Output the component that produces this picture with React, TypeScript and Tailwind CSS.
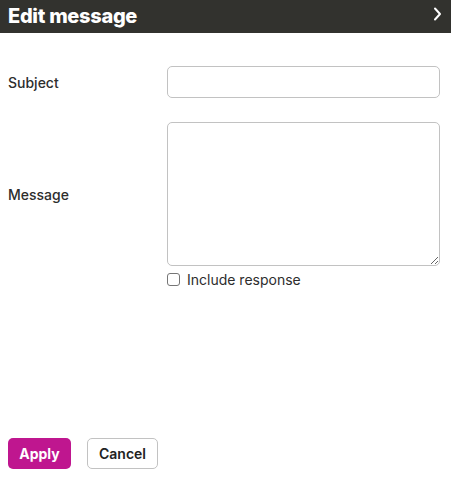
export default function App() {
  return (
    <div className="w-[451px] h-[478px] bg-white flex flex-col" style={{ fontFamily: "Inter, 'Noto Sans', sans-serif" }}>
      <div className="h-[33px] bg-[#32322e] flex items-center justify-between pl-2 pr-[9px] shrink-0">
        <h1 className="text-[20px] leading-none font-extrabold text-white tracking-[-0.3px] mb-[2px]">Edit message</h1>
        <svg width="9" height="14" viewBox="0 0 9 14" fill="none" className="mb-[5px]">
          <path d="M2 1.5 L7 7 L2 12.5" stroke="white" strokeWidth="2" strokeLinecap="round" strokeLinejoin="round" />
        </svg>
      </div>
      <div className="flex-1 flex flex-col pl-2 pr-[11px] pt-[33px]">
        <div className="grid grid-cols-[159px_273px] items-center">
          <label className="text-[14px] font-medium text-[#2d2d2d]">Subject</label>
          <input type="text" className="h-[32px] border border-[#c2c2c2] rounded-[5px] px-2 text-[14px] outline-none" />
        </div>
        <div className="grid grid-cols-[159px_273px] items-center mt-[24px]">
          <label className="text-[14px] font-medium text-[#2d2d2d]">Message</label>
          <textarea className="h-[144px] border border-[#c2c2c2] rounded-[5px] px-2 py-1 text-[14px] outline-none block" />
        </div>
        <div className="grid grid-cols-[159px_273px] mt-[3px]">
          <div />
          <label className="flex items-center gap-[7px] text-[14px] text-[#2d2d2d]">
            <input type="checkbox" className="w-[13px] h-[13px] m-0 appearance-none border border-[#767676] rounded-[3px] bg-white" />
            Include response
          </label>
        </div>
        <div className="flex-1" />
        <div className="flex gap-4 pb-[9px]">
          <button className="h-[31px] w-[63px] rounded-[5px] bg-[#bf168f] text-white text-[14px] font-bold">Apply</button>
          <button className="h-[31px] w-[71px] rounded-[5px] bg-white border border-[#c2c2c2] text-[#222] text-[14px] font-semibold">Cancel</button>
        </div>
      </div>
    </div>
  );
}
